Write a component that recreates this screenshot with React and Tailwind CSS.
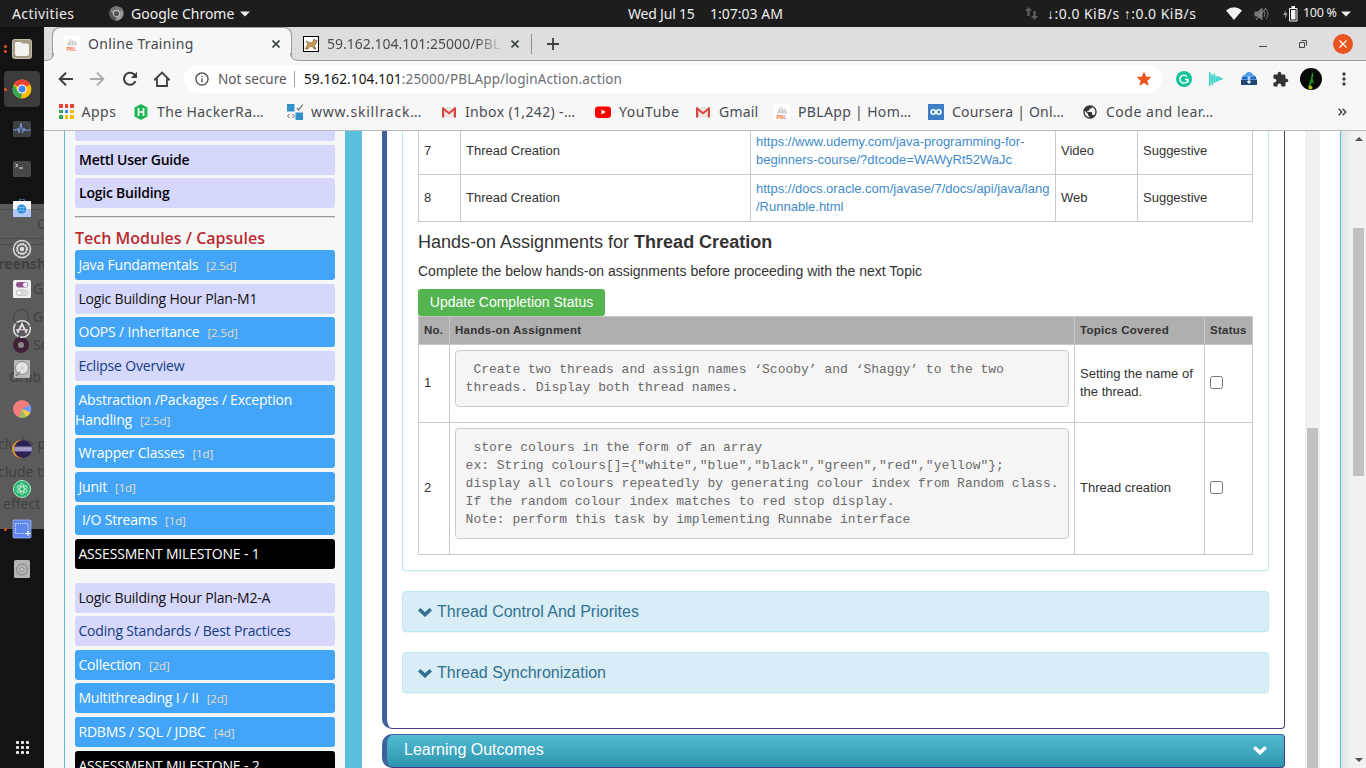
import React from "react";
import { MdInfoOutline, MdStar, MdExtension, MdMoreVert, MdPublic } from "react-icons/md";

const UI = "font-['Noto_Sans',sans-serif]";

function Chrome({ gray = false, className }) {
  const c = gray ? ["#777", "#999", "#555", "#ccc", "#555"] : ["#ea4335", "#fbbc05", "#34a853", "#fff", "#4285f4"];
  return (
    <svg viewBox="0 0 20 20" className={className}>
      <circle cx="10" cy="10" r="9.5" fill={c[1]} />
      <path d="M10 10 L1.8 5.2 A9.5 9.5 0 0 1 18.2 5.2 Z" fill={c[0]} />
      <path d="M1.8 5.2 L6 12.4 L10 14.5 L9 19.5 A9.5 9.5 0 0 1 1.8 5.2 Z" fill={c[2]} />
      <path d="M10 5.2 H18.2 V6 H10Z" fill={c[0]} />
      <circle cx="10" cy="10" r="4.6" fill={c[3]} />
      <circle cx="10" cy="10" r="3.5" fill={c[4]} />
    </svg>
  );
}

function PblIcon() {
  return (
    <svg viewBox="0 0 16 16" className="size-4 shrink-0">
      <rect width="16" height="16" fill="#fff" />
      <path d="M3 9.5 L6.5 2 L6.5 9.5Z M7.3 9.5 L7.6 3 Q10 5 9.8 9.5Z M10.3 9.5 L10.5 4 Q13 6 13 9.5Z" fill="#c9c9c9" />
      <text x="2.5" y="15" fontSize="5" fontWeight="bold" fontFamily="Liberation Sans" fill="#f07030">PBL</text>
    </svg>
  );
}

function Gmail() {
  return (
    <svg viewBox="0 0 16 16" className="size-4 shrink-0">
      <rect x="1" y="3" width="14" height="10.5" fill="#e8e4e4" />
      <path d="M1 13.5V3.2h1.2L8 8l5.8-4.8H15v10.3h-2.2V6.6L8 10.6 3.2 6.6v6.9z" fill="#d8443a" />
    </svg>
  );
}

const Chevron = () => (
  <svg viewBox="0 0 14 10" className="h-[10px] w-[14px] shrink-0"><path d="M1.200 2.200 7 7.600l5.800-5.400" fill="none" stroke="currentColor" strokeWidth="3.600" /></svg>
);

function TopBar() {
  return (
    <header className={`flex h-[27px] shrink-0 items-center bg-[#1d1d1d] text-[14px] text-[#eee] ${UI}`}>
      <div className="w-[109px] shrink-0 pl-3"><span className="tracking-[0.4px]">Activities</span></div>
      <div className="flex w-[519px] shrink-0 items-center">
        <Chrome gray className="mr-[7px] size-[15px]" />
        <span className="w-[109px] whitespace-nowrap">Google Chrome</span>
        <svg viewBox="0 0 10 6" className="h-[6px] w-[10px]"><path d="M0 0.5h10L5 5.5z" fill="#eee" /></svg>
      </div>
      <div className="flex w-[397px] shrink-0 pb-px text-[14px]">
        <span className="w-[82px] whitespace-nowrap tracking-[-0.2px]">Wed Jul 15</span>
        <span className="whitespace-nowrap">1:07:03 AM</span>
      </div>
      <div className="flex items-center">
        <svg viewBox="0 0 13 13" className="h-[13px] w-[13px]" fill="#5d5d5a"><path d="M0 4 3.5 0 7 4H4.700V9H2.300V4zM6 9h2.300V4h2.400V9H13L9.500 13z" /></svg>
        <span className="ml-[9px] w-[151px] whitespace-nowrap pb-px tracking-[0.47px]">↓:0.0 KiB/s ↑:0.0 KiB/s</span>
        <svg viewBox="0 0 16 13" className="ml-[28px] h-[13px] w-4"><path d="M0 3.500Q8-3 16 3.500L8 13z" fill="#f2f2f2" /></svg>
        <svg viewBox="0 0 16 14" className="ml-3 h-[14px] w-4" fill="none" stroke="#777"><path d="M1 5h3l4-4v12L4 9H1z" fill="#777" /><path d="M10 4q2 3 0 6M12 2q4 5 0 10" /><path d="M2 13 12 1" stroke="#999" /></svg>
        <svg viewBox="0 0 15 16" className="ml-[13px] h-4 w-[15px]"><path d="M3 4 0 9h2v4l2.500-6h-2z" fill="#999" /><path d="M6.500 2.500h7.500v12.500H6.500z" fill="none" stroke="#f2f2f2" /><path d="M8 4h4.500v9.500H8zM8.500 0h3.500v2H8.500z" fill="#f2f2f2" /></svg>
        <span className="ml-[5px] w-[38px] whitespace-nowrap text-[12.500px] tracking-[-0.3px]">100 %</span>
        <svg viewBox="0 0 10 6" className="h-[6px] w-[10px]"><path d="M0 0.500h10L5 5.500z" fill="#eee" /></svg>
      </div>
    </header>
  );
}

const dockIcons = [
  <svg viewBox="0 0 20 20" className="size-5"><rect x=".5" y=".5" width="19" height="19" rx="2" fill="#a69c86" stroke="#c4bdab" /><path d="M3 4.500q0-1.500 1.500-1.500H9l1 1.500h5q2 0 2 2v8.500q0 2-2 2H5q-2 0-2-2z" fill="#f5f3f0" /></svg>,
  <Chrome className="size-5" />,
  <svg viewBox="0 0 20 20" className="size-5"><rect x="1" y="2" width="18" height="16" rx="1.500" fill="#3d4146" /><path d="M1 11h4l1-2 1 5 2-10 1.500 10L12 9l1 3 1-1h5" fill="none" stroke="#7c95d8" /></svg>,
  <svg viewBox="0 0 20 20" className="size-5"><rect x="1" y="2" width="18" height="16" rx="1.500" fill="#474747" /><path d="M3.500 5 6 6.500 3.500 8M7 9h4" fill="none" stroke="#eee" /></svg>,
  <svg viewBox="0 0 20 20" className="size-5"><path d="M7 2q0-2 3-2t3 2" fill="none" stroke="#5c7fcf" /><rect x="1" y="2" width="18" height="16" rx="1" fill="#f5f5f5" /><path d="M1 10h18v8H1z" fill="#b5c8f5" /><circle cx="9.600" cy="10" r="4.500" fill="#1e88d8" /><path d="M6 8.500h7M6 11.500h7M8 6.500v7M11 6.500v7" stroke="#9ad0f5" strokeWidth=".6" /></svg>,
  <svg viewBox="0 0 20 20" className="size-5"><circle cx="10" cy="10" r="8.500" fill="#5b5b5b" stroke="#dedede" strokeWidth="1.500" /><circle cx="10" cy="10" r="4.500" fill="none" stroke="#dedede" strokeWidth="1.300" /><circle cx="10" cy="10" r="5.600" fill="none" stroke="#dedede" strokeWidth="1.200" strokeDasharray="1.700 1.230" /><circle cx="10" cy="10" r="2.300" fill="#dedede" /></svg>,
  <svg viewBox="0 0 20 20" className="size-5"><rect x="1" y="1" width="18" height="18" rx="1.500" fill="#f0f0f0" /><rect x="4" y="3" width="12" height="5.500" rx="2.750" fill="#93508f" /><circle cx="13.200" cy="5.750" r="2.200" fill="#fff" /><rect x="4" y="11" width="12" height="5.500" rx="2.750" fill="#ddd" stroke="#bbb" strokeWidth=".6" /><circle cx="7" cy="13.750" r="2.400" fill="#fff" stroke="#aaa" strokeWidth=".6" /></svg>,
  <svg viewBox="0 0 20 20" className="size-5"><circle cx="10" cy="10" r="8.300" fill="none" stroke="#ddd" strokeWidth="1.600" strokeDasharray="15 1.500" /><path d="M5.500 14 10 5l4.500 9M4 11h12" fill="none" stroke="#e5e5e5" strokeWidth="1.700" /><path d="M7 11.500h6" stroke="#a86aa0" /></svg>,
  <svg viewBox="0 0 20 20" className="size-5"><rect x="2" y="1" width="16" height="18" rx="1" fill="#b9b9b9" /><circle cx="10" cy="9" r="6.500" fill="#e2e2e2" stroke="#777" strokeWidth=".8" /><circle cx="10" cy="9" r="1.600" fill="#ccc" /><path d="m4 17 4-4" stroke="#777" strokeWidth="1.500" /></svg>,
  <svg viewBox="0 0 20 20" className="size-5"><circle cx="10" cy="10" r="9" fill="#f47c7c" /><path d="m10 10 8-4.200A9 9 0 0 1 18.500 13.500z" fill="#6e9bf0" /><path d="m10 10 8.500 3.500A9 9 0 0 1 14 18z" fill="#f2cf4c" /><path d="m10 10 4 8a9 9 0 0 1-6.500.6z" fill="#8ac558" /></svg>,
  <svg viewBox="0 0 20 20" className="size-5"><circle cx="9" cy="10" r="9" fill="#f09a20" /><circle cx="11" cy="10" r="9" fill="#2b2153" /><path d="M2.400 7.500h17.200v5H2.400z" fill="#8f88b8" /><path d="M2 9.200h18M2 10.900h18" stroke="#bdb7d8" strokeWidth=".7" /></svg>,
  <svg viewBox="0 0 20 20" className="size-5"><circle cx="10" cy="10" r="8.500" fill="#2bb673" stroke="#b9e5c8" /><g fill="none" stroke="#d5f0dc" strokeWidth=".8"><ellipse cx="10" cy="10" rx="2.200" ry="5.500" /><ellipse cx="10" cy="10" rx="2.200" ry="5.500" transform="rotate(60 10 10)" /><ellipse cx="10" cy="10" rx="2.200" ry="5.500" transform="rotate(120 10 10)" /></g></svg>,
  <svg viewBox="0 0 20 20" className="size-5"><rect x="1" y="1" width="18" height="18" rx="1" fill="#5f86ea" stroke="#a5bdf5" strokeWidth=".7" /><rect x="3.500" y="4.500" width="12.500" height="10" fill="none" stroke="#dfe8ff" strokeDasharray="1.200 1" /><path d="M16 12v5M13.500 14.500h5" stroke="#fff" /></svg>,
  <svg viewBox="0 0 20 20" className="size-5"><rect x="2" y="1" width="16" height="18" rx="1.500" fill="#b4b4b4" /><circle cx="10" cy="10.500" r="5.500" fill="none" stroke="#848484" /><circle cx="10" cy="10.500" r="2" fill="#ccc" stroke="#777" strokeWidth=".7" /></svg>,
];

const ghosts = [
  { t: "C", c: "left-[37px] top-[189px]" },
  { t: "creensh", c: "left-[-9px] top-[229px] font-bold" },
  { t: "G", c: "left-[33px] top-[254px]" },
  { t: "G", c: "left-[33px] top-[282px]" },
  { t: "Se", c: "left-[33px] top-[310px]" },
  { t: "Grab", c: "left-[9px] top-[342px]" },
  { t: "clude po", c: "left-[-2px] top-[409px]" },
  { t: "clude th", c: "left-[-2px] top-[437px]" },
  { t: "effect", c: "left-[3px] top-[469px]" },
];

function Dock() {
  return (
    <nav className="relative flex w-[44px] shrink-0 flex-col items-center overflow-hidden bg-[#131313] pt-[2px]">
      <div className="absolute inset-x-0 top-[177px] h-[325px] bg-[#5b5b5b]">
        <div className="mt-[5px] h-[30px] border-y border-[#4c4c4c]" />
        <div className="mt-[5px] border-t border-[#4c4c4c]" />
      </div>
      <div className={`absolute inset-0 text-[14px] leading-[16px] text-[#414141] ${UI}`}>
        {ghosts.map((g, i) => <span key={i} className={`absolute whitespace-nowrap ${g.c}`}>{g.t}</span>)}
        <span className="absolute left-[13px] top-[282px] size-4 rounded-full border border-[#444]" />
        <span className="absolute left-[13px] top-[310px] size-4 rounded-full border-[5px] border-[#3f2238] bg-[#888]" />
      </div>
      {dockIcons.map((icon, i) => (
        <div key={i} className="relative flex h-10 w-full shrink-0 items-center justify-center">
          {i === 1 && <div className="absolute left-1 top-[2px] size-9 rounded-[4px] bg-[#3c3c3c]" />}
          <div className="relative">{icon}</div>
          {(i === 1 || i === 12) && <span className="absolute left-1 top-[19px] size-[3px] rounded-full bg-[#e95420]" />}
          {i === 0 && <><span className="absolute left-1 top-[16px] size-[3px] rounded-full bg-[#e95420]" /><span className="absolute left-1 top-[21px] size-[3px] rounded-full bg-[#e95420]" /></>}
        </div>
      ))}
      <div className="mb-[14px] mt-auto grid grid-cols-3 gap-[2px]">
        {Array.from({ length: 9 }, (_, i) => <span key={i} className="size-[3px] rounded-[1px] bg-[#eee]" />)}
      </div>
    </nav>
  );
}

const CloseX = () => <svg viewBox="0 0 8 8" className="size-2 shrink-0"><path d="m.5.5 7 7m0-7-7 7" stroke="#3c4043" strokeWidth="1.600" /></svg>;

function TabStrip() {
  return (
    <div className="flex h-[34px] shrink-0 bg-[#dedede] text-[14px] text-[#45484c] shadow-[inset_0_-1px_0_#999]">
      <div className="relative ml-2 flex w-[240px] shrink-0 items-center rounded-t-lg border-x border-t border-[#999] bg-[#f7f7f7] pb-px">
        <svg viewBox="0 0 9 8" className="absolute bottom-0 left-[-8px] h-2 w-[9px]"><path d="M9 0v8H0V7.500Q8.500 7 8.500 0z" fill="#f7f7f7" /><path d="M0 7.500Q8.500 7.500 8.500 0" fill="none" stroke="#999" /></svg>
        <svg viewBox="0 0 9 8" className="absolute bottom-0 right-[-8px] h-2 w-[9px]"><path d="M0 0v8h9V7.500Q.5 7 .5 0z" fill="#f7f7f7" /><path d="M9 7.500Q.5 7.500.5 0" fill="none" stroke="#999" /></svg>
        <div className="ml-[11px]"><PblIcon /></div>
        <span className="ml-2 w-[184px] whitespace-nowrap pb-px tracking-[0.34px]">Online Training</span>
        <CloseX />
      </div>
      <div className="flex w-[240px] shrink-0 items-center pl-[11px]">
        <svg viewBox="0 0 16 16" className="size-4 shrink-0"><rect x=".5" y=".5" width="15" height="15" fill="#fff" stroke="#000" /><path d="M2 13 5 8 3 5l4 2 3-1 1-3 1 1.500 2-.5-1 4-2 1 2 4h-2l-2-3-3 1-1 2z" fill="#c9a050" stroke="#6b5420" strokeWidth=".6" /></svg>
        <span className="ml-2 w-[176px] overflow-hidden whitespace-nowrap bg-linear-to-r from-[#45484c] from-85% to-transparent bg-clip-text pb-px text-transparent">59.162.104.101:25000/PBL</span>
        <span className="ml-2"><CloseX /></span>
        <span className="ml-3 h-5 w-px shrink-0 bg-[#8d8d8d]" />
      </div>
      <div className="flex flex-1 items-center pl-[15px]">
        <svg viewBox="0 0 12 12" className="size-3"><path d="M6 0v12M0 6h12" stroke="#3c4043" strokeWidth="1.800" /></svg>
        <div className="ml-auto flex items-center pr-[13px]">
          <span className="mt-[5px] h-px w-2 bg-[#444]" />
          <svg viewBox="0 0 8 8" className="ml-8 size-2"><path d="M.5 2.500h5v5h-5zM2.500.5h5v5" fill="none" stroke="#444" /></svg>
          <span className="ml-[26px] flex size-5 items-center justify-center rounded-full bg-[#e95420]"><svg viewBox="0 0 8 8" className="size-2"><path d="m.5.5 7 7m0-7-7 7" stroke="#fff" strokeWidth="1.200" /></svg></span>
        </div>
      </div>
    </div>
  );
}

function Toolbar() {
  return (
    <div className="flex h-[36px] shrink-0 items-center bg-[#f7f7f7] text-[#3c4043]">
      <svg viewBox="0 0 16 16" className="ml-[14px] size-4"><path d="M15 8H2M8 1.700 1.700 8 8 14.300" fill="none" stroke="#3c4043" strokeWidth="2" /></svg>
      <svg viewBox="0 0 16 16" className="ml-[15px] size-4"><path d="M1 8h13M8 1.700 14.300 8 8 14.300" fill="none" stroke="#aaa" strokeWidth="1.900" /></svg>
      <svg viewBox="0 0 16 16" className="ml-[17px] size-4"><path d="M13.500 10.200A6 6 0 1 1 12.300 3.600L13.500 5" fill="none" stroke="#3c4043" strokeWidth="2.100" /><path d="M15 .800V7H8.800z" fill="#3c4043" /></svg>
      <svg viewBox="0 0 16 16" className="ml-[16px] size-4"><path d="M1 8.500 8 1.500l7 7h-2V15H3V8.500z" fill="none" stroke="#3c4043" strokeWidth="1.800" /></svg>
      <div className="ml-[14px] flex h-7 w-[978px] shrink-0 items-center rounded-full bg-white text-[13.500px]">
        <MdInfoOutline className="ml-[10px] size-4 text-[#4d5054]" />
        <span className="ml-2 w-[76px] whitespace-nowrap text-[#55585c]">Not secure</span>
        <span className="h-4 w-px bg-[#9aa0a6]" />
        <span className="ml-[9px] whitespace-nowrap tracking-[0.14px] text-[#6b6e72]"><span className="text-[#111]">59.162.104.101</span>:25000/PBLApp/loginAction.action</span>
        <MdStar className="ml-auto mr-[9px] size-[18px] text-[#e95420]" />
      </div>
      <span className="ml-[14px] flex size-4 shrink-0 items-center justify-center rounded-full bg-[#15c39a]"><svg viewBox="0 0 10 10" className="size-[10px]"><path d="M8 2.500A4 4 0 1 0 9 5.500H6M9 5.500V8.500" fill="none" stroke="#fff" strokeWidth="1.400" /></svg></span>
      <svg viewBox="0 0 16 16" className="ml-4 size-4 shrink-0"><path d="M1 1h1.500v14H1zM3.500 3H5v11H3.500zM6 2.500h1.200v9.500H6zM8 5h1.200v6H8zM10 5l5 3-5 2z" fill="#3fd0c6" /><path d="M1 3 15 8 1 13z" fill="#48d6cc" fillOpacity=".75" /></svg>
      <svg viewBox="0 0 16 14" className="ml-[17px] h-[14px] w-4 shrink-0"><path d="M4 3q1-3 4-3t4 3q3 0 3 3l1 2v5H0V8l1-2q0-3 3-3z" fill="#4f9be8" /><path d="M0 8h16v5H0z" fill="#1f4674" /><path d="M1 5h5v2H1zM10 5h5v2h-5z" fill="#2c64a5" /><path d="M8 4v7M6.300 9.200l1.700 1.800 1.700-1.800" fill="none" stroke="#e8f2ff" strokeWidth="1.300" /></svg>
      <MdExtension className="ml-[15px] size-[17px] shrink-0 text-[#333]" />
      <svg viewBox="0 0 22 22" className="ml-[11px] size-[22px] shrink-0"><circle cx="11" cy="11" r="11" fill="#050a05" /><path d="M12 4l1.500 3-1 3 1.500 6-2-2-2 4-2 1 3-8z" fill="#1f9a1f" /><circle cx="10.500" cy="19.500" r="2" fill="#b5b91a" /></svg>
      <MdMoreVert className="ml-[12px] size-5 shrink-0" />
    </div>
  );
}

const appColors = ["bg-[#ea4335]", "bg-[#ea4335]", "bg-[#ea4335]", "bg-[#34a853]", "bg-[#4285f4]", "bg-[#fbbc05]", "bg-[#34a853]", "bg-[#fbbc05]", "bg-[#fbbc05]"];
const bookmarks = [
  { w: "w-[75px]", k: "tracking-[0.5px]", t: "Apps", icon: <div className="ml-px grid grid-cols-3 gap-[2px]">{appColors.map((c, i) => <span key={i} className={`size-[3.500px] ${c}`} />)}</div> },
  { w: "w-[154px]", k: "tracking-[0.4px]", t: "The HackerRa…", icon: <svg viewBox="0 0 16 16" className="size-4 shrink-0"><path d="M8 0 14.500 3.500v9L8 16l-6.500-3.500v-9z" fill="#1eb955" /><path d="M5.500 4v8M10.500 4v8M5.500 8h5" stroke="#fff" strokeWidth="1.700" /></svg> },
  { w: "w-[154px]", k: "tracking-[0.8px]", t: "www.skillrack…", icon: <svg viewBox="0 0 16 16" className="size-4 shrink-0"><path d="M0 0h7.500v7.500H0zM8.500 8.500H16V16H8.500z" fill="#3193c9" /><path d="m10 4 1.500 2L16 .5" fill="none" stroke="#777" strokeWidth="1.300" /><path d="m2.500 10-2 2 2 2m3-4 2 2-2 2" fill="none" stroke="#666" /></svg> },
  { w: "w-[154px]", k: "tracking-[0.36px]", t: "Inbox (1,242) -…", icon: <Gmail /> },
  { w: "w-[100px]", k: "tracking-[0.55px]", t: "YouTube", icon: <svg viewBox="0 0 16 16" className="size-4 shrink-0"><rect y="2.500" width="16" height="11.500" rx="3" fill="#f00" /><path d="M6.300 5.500v5l4.500-2.500z" fill="#fff" /></svg> },
  { w: "w-[79px]", k: "tracking-[0.2px]", t: "Gmail", icon: <Gmail /> },
  { w: "w-[154px]", k: "tracking-[0.34px]", t: "PBLApp | Hom…", icon: <PblIcon /> },
  { w: "w-[154px]", k: "tracking-[0.2px]", t: "Coursera | Onl…", icon: <svg viewBox="0 0 16 16" className="size-4 shrink-0"><rect width="16" height="16" fill="#3d7fc4" /><g fill="none" stroke="#fff" strokeWidth="1.500"><circle cx="5.200" cy="8" r="2.200" /><circle cx="10.800" cy="8" r="2.200" /></g></svg> },
  { w: "w-[200px]", k: "tracking-[0.52px]", t: "Code and lear…", icon: <MdPublic className="size-4 shrink-0 text-[#333]" /> },
];

function Bookmarks() {
  return (
    <div className="flex h-[34px] shrink-0 items-center border-b border-[#b9b9b9] bg-[#f7f7f7] pb-[4px] pl-[14px] text-[14px] text-[#494c50]">
      {bookmarks.map((b, i) => (
        <div key={i} className={`flex shrink-0 items-center gap-2 ${b.w}`}>
          {b.icon}
          <span className={`whitespace-nowrap pb-px ${b.k}`}>{b.t}</span>
        </div>
      ))}
      <svg viewBox="0 0 9 8" className="ml-auto mr-[19px] h-2 w-[9px]"><path d="m.7.700 3 3.300-3 3.300m4-6.600 3 3.300-3 3.300" fill="none" stroke="#3c4043" strokeWidth="1.500" /></svg>
    </div>
  );
}

const blue = "bg-[#42a5f7] text-white";
const lav = "bg-[#d5d7fd]";
const modules = [
  { t: "Java Fundamentals", d: "[2.5d]", c: `${blue} h-[30px]` },
  { t: "Logic Building Hour Plan-M1", c: `${lav} text-[#111] mt-1 h-[30px]` },
  { t: "OOPS / Inheritance", d: "[2.5d]", c: `${blue} mt-[3px] h-[30px]` },
  { t: "Eclipse Overview", c: `${lav} text-[#143c7d] mt-1 h-[30px]` },
  { t: "Abstraction /Packages / Exception Handling", d: "[2.5d]", c: `${blue} mt-1 h-[50px]` },
  { t: "Wrapper Classes", d: "[1d]", c: `${blue} mt-[3px] h-[30px]` },
  { t: "Junit", d: "[1d]", c: `${blue} mt-1 h-[30px]` },
  { t: "\u00a0I/O Streams", d: "[1d]", c: `${blue} mt-[3px] h-[30px]` },
  { t: "ASSESSMENT MILESTONE - 1", c: "bg-black text-white mt-1 h-[30px]" },
  { t: "Logic Building Hour Plan-M2-A", c: `${lav} text-[#111] mt-[14px] h-[30px]` },
  { t: "Coding Standards / Best Practices", c: `${lav} text-[#143c7d] mt-[3px] h-[30px]` },
  { t: "Collection", d: "[2d]", c: `${blue} mt-1 h-[30px]` },
  { t: "Multithreading I / II", d: "[2d]", c: `${blue} mt-[3px] h-[30px]` },
  { t: "RDBMS / SQL / JDBC", d: "[4d]", c: `${blue} mt-1 h-[30px]` },
  { t: "ASSESSMENT MILESTONE - 2", c: "bg-black text-white mt-1 h-[30px]" },
];

function Sidebar() {
  return (
    <aside className="ml-5 w-[298px] shrink-0 overflow-hidden border-l border-r-[17px] border-[#5bc0de] bg-[#f5f8f7] px-[10px] font-['Open_Sans',sans-serif] text-[14px] leading-5">
      <div className={`h-[10px] rounded-b-[3px] ${lav}`} />
      <div className={`mt-1 h-[30px] rounded-[3px] pl-1 pt-[5px] font-semibold tracking-[-0.25px] text-black ${lav}`}>Mettl User Guide</div>
      <div className={`mt-[3px] h-[30px] rounded-[3px] pl-1 pt-[5px] font-semibold tracking-[-0.22px] text-black ${lav}`}>Logic Building</div>
      <div className="mt-2 h-[2px] border-t border-[#999] bg-[#e0e0e0]" />
      <h3 className="mt-[9px] h-[23px] text-[16px] font-semibold leading-[22px] text-[#b92b30]">Tech Modules / Capsules</h3>
      {modules.map((m, i) => (
        <div key={i} className={`overflow-hidden rounded-[3px] pt-[5px] tracking-[-0.19px] ${m.c}`}>
          {"\u00a0"}{m.t}
          {m.d && <span className="ml-2 text-[11.500px] tracking-[-0.1px] text-[#e8dccb]">{m.d}</span>}
        </div>
      ))}
    </aside>
  );
}

function Cell({ children, className = "" }) {
  return <div className={`flex items-center border-b border-l border-[#c8c8c8] px-[5px] ${className}`}>{children}</div>;
}

const Check = () => <span className="size-[13px] rounded-[2.500px] border border-[#767676] bg-white" />;
const Quote = ({ children }) => <div className="w-full self-start whitespace-pre rounded-[4px] border border-[#ccc] bg-[#f5f5f5] px-[9.600px] pb-[9px] pt-[10px] font-['Liberation_Mono',monospace] text-[13px] leading-[18px] text-[#6a6a6a]">{children}</div>;

const resources = [
  { n: 7, a: "https://www.udemy.com/java-programming-for-", b: "beginners-course/?dtcode=WAWyRt52WaJc", k: "Video" },
  { n: 8, a: "https://docs.oracle.com/javase/7/docs/api/java/lang", b: "/Runnable.html", k: "Web" },
];

function Content() {
  return (
    <main className="ml-5 w-[903px] shrink-0 font-['Liberation_Sans',sans-serif] text-[13px] leading-[18px] text-[#333]">
      <section className="h-[598px] overflow-hidden rounded-b-[4px] rounded-bl-[10px] border-b border-l-[5px] border-r border-b-[#4a3888] border-l-[#41619d] border-r-[#4a3888] bg-white px-[15px]">
        <div className="h-[440px] overflow-hidden rounded-b-[4px] border-x border-b border-[#bce8f1] px-[15px] shadow-[0_1px_1px_rgba(0,0,0,0.05)]">
          <div className="-mt-[3px] border-r border-[#c8c8c8]">
            {resources.map((r) => (
              <div key={r.n} className="grid h-[47px] grid-cols-[42px_290px_305px_82px_115px]">
                <Cell>{r.n}</Cell>
                <Cell>Thread Creation</Cell>
                <Cell className="text-[#428bca]"><span className="whitespace-nowrap">{r.a}<br />{r.b}</span></Cell>
                <Cell>{r.k}</Cell>
                <Cell>Suggestive</Cell>
              </div>
            ))}
          </div>
          <h4 className="mt-[10px] text-[18px] leading-5">Hands-on Assignments for <b>Thread Creation</b></h4>
          <p className="mt-[9px] text-[14px] leading-5">Complete the below hands-on assignments before proceeding with the next Topic</p>
          <div className="mt-2 flex h-[27px] w-[187px] items-center justify-center rounded-[3px] bg-[#54b450] pb-px text-[14px] text-white">Update Completion Status</div>
          <div className="w-[835px] border-r border-t border-[#c8c8c8]">
            <div className="grid h-7 grid-cols-[31px_625px_130px_48px] bg-[#afafaf] text-[11.500px] font-bold tracking-[0.25px]">
              <Cell className="pb-px">No.</Cell><Cell className="pb-px">Hands-on Assignment</Cell><Cell className="pb-px">Topics Covered</Cell><Cell className="pb-px">Status</Cell>
            </div>
            <div className="grid h-[78px] grid-cols-[31px_625px_130px_48px]">
              <Cell className="pb-px">1</Cell>
              <Cell className="pt-[5px]"><Quote>{" Create two threads and assign names ‘Scooby’ and ‘Shaggy’ to the two\nthreads. Display both thread names."}</Quote></Cell>
              <Cell className="pb-px">Setting the name of the thread.</Cell>
              <Cell className="pb-[3px]"><Check /></Cell>
            </div>
            <div className="grid h-[132px] grid-cols-[31px_625px_130px_48px]">
              <Cell className="pb-px">2</Cell>
              <Cell className="pt-[5px]"><Quote>{" store colours in the form of an array\nex: String colours[]={\"white\",\"blue\",\"black\",\"green\",\"red\",\"yellow\"};\ndisplay all colours repeatedly by generating colour index from Random class.\nIf the random colour index matches to red stop display.\nNote: perform this task by implementing Runnabe interface"}</Quote></Cell>
              <Cell className="pb-px">Thread creation</Cell>
              <Cell className="pb-[3px]"><Check /></Cell>
            </div>
          </div>
        </div>
        {["Thread Control And Priorites", "Thread Synchronization"].map((t) => (
          <div key={t} className="mt-5 flex h-[41px] items-center gap-[5px] rounded-[4px] border border-[#bce8f1] bg-[#d9edf7] px-[15px] text-[16px] text-[#31708f] shadow-[0_1px_1px_rgba(0,0,0,0.05)]">
            <Chevron />{t}
          </div>
        ))}
      </section>
      <section className="mt-[5px] flex h-[34px] items-center justify-between rounded-[4px] rounded-l-[10px] border border-l-[5px] border-[#4a3888] border-l-[#41619d] border-t-[#41619d] bg-linear-to-b from-[#51bbd3] to-[#2d96af] pb-[3px] pl-[17px] pr-[17px] text-[16px] text-white">
        Learning Outcomes<Chevron />
      </section>
    </main>
  );
}

export default function App() {
  return (
    <div className="flex h-[768px] w-[1366px] flex-col overflow-hidden">
      <TopBar />
      <div className="flex min-h-0 flex-1">
        <Dock />
        <div className={`flex min-w-0 flex-1 flex-col ${UI}`}>
          <TabStrip />
          <Toolbar />
          <Bookmarks />
          <div className="flex min-h-0 flex-1 bg-[#f5f8f7]">
            <Sidebar />
            <div className="flex w-[979px] shrink-0 overflow-hidden border-r border-[#5bc0de] bg-white">
              <Content />
              <div className="ml-5 w-[15px] shrink-0 bg-[#f1f1f1] px-[2px] pt-[297px]"><div className="h-full bg-[#c1c1c1]" /></div>
            </div>
            <div className="w-[10px] shrink-0 bg-linear-to-r from-[#dfe2e2] to-[#eff1f1]" />
            <div className="flex w-[15px] shrink-0 flex-col items-center bg-[#f1f1f1] py-[6px]">
              <svg viewBox="0 0 8 4" className="h-1 w-2 shrink-0"><path d="M0 4h8L4 0z" fill="#505050" /></svg>
              <div className="mt-[87px] h-[248px] w-[11px] bg-[#c1c1c1]" />
              <svg viewBox="0 0 8 4" className="mt-auto h-1 w-2"><path d="M0 0h8L4 4z" fill="#505050" /></svg>
            </div>
          </div>
        </div>
      </div>
    </div>
  );
}
